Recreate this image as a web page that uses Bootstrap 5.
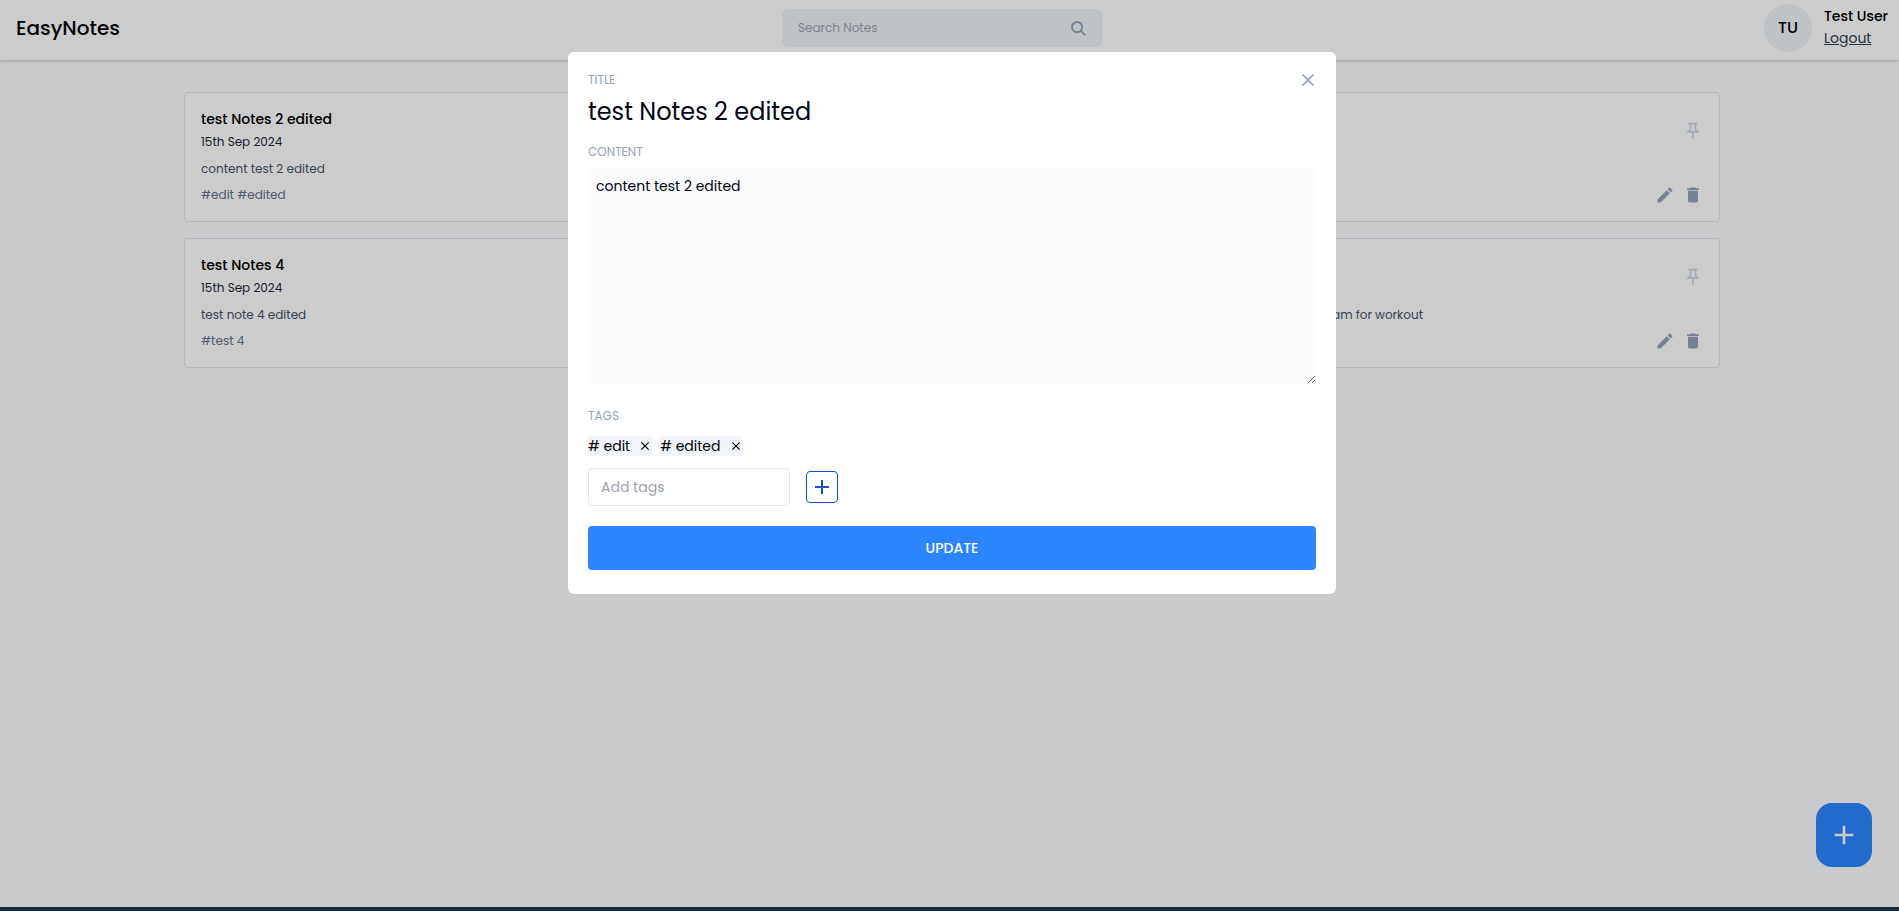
<!DOCTYPE html>
<html lang="en">
<head>
<meta charset="utf-8">
<meta name="viewport" content="width=device-width, initial-scale=1">
<title>EasyNotes</title>
<link href="https://cdn.jsdelivr.net/npm/bootstrap@5.3.0/dist/css/bootstrap.min.css" rel="stylesheet">
<style>
  body { font-family: Poppins, Inter, sans-serif; font-size: 14px; line-height: 20px; color: #000; background: #fcfdff; border-bottom: 4px solid #0f2a3b; }
  button, input, textarea { font-family: inherit; }
  svg { display: block; fill: currentColor; }
  .icon-btn { padding: 0; border: 0; background: none; color: #94a3b8; }
  .topbar { background: #fff; padding: 4px 11px 8px 16px; box-shadow: 0 1px 3px rgba(0,0,0,.22); }
  .brand { font-size: 20px; line-height: 28px; font-weight: 500; width: 104px; color: #000; }
  .searchbox { width: 320px; height: 38px; padding: 0 16px; background: #f0f4f8; border-radius: 6px; }
  .searchbox input { border: 0; background: none; outline: 0; font-size: 12px; min-width: 0; }
  .searchbox input::placeholder, .tag-input::placeholder { color: #9ca3af; opacity: 1; }
  .avatar { width: 48px; height: 48px; border-radius: 50%; background: #f0f4f8; font-size: 16px; font-weight: 500; color: #020617; }
  .logout { line-height: 24px; color: #334155; }
  .board { padding: 32px 0 32px 5px; }
  .notes { display: grid; grid-template-columns: 1fr 1fr; gap: 16px; max-width: 1536px; }
  .note { background: #fff; border: 1px solid #e2e5ea; border-radius: 4px; padding: 16px; }
  .note h2 { font-size: 14px; line-height: 20px; font-weight: 500; margin: 0; }
  .note .when { font-size: 16px; line-height: 24px; height: 24px; }
  .note time { font-size: 12px; color: #1e293b; }
  .note p { font-size: 12px; line-height: 16px; color: #475569; margin: 8px 0; }
  .note .tagline { font-size: 12px; color: #64748b; }
  .note .tail { max-width: 446px; text-align: right; }
  .pin { color: #cbd5e1; }
  .add-note { right: 27px; bottom: 40px; width: 56px; height: 64px; border: 0; border-radius: 16px; background: #2b85ff; color: #fff; }
  .overlay { inset: 0; padding: 52px 0 0 5px; background: rgba(0,0,0,.2); z-index: 10; }
  .dialog { width: 768px; max-width: 100%; background: #fff; border-radius: 6px; padding: 20px 20px 24px; }
  .field-label { font-size: 12px; line-height: 16px; color: #94a3b8; }
  .title-input { border: 0; outline: 0; padding: 0; font-size: 24px; line-height: 32px; height: 32px; color: #020617; }
  .body-input { height: 216px; padding: 8px; border: 0; outline: 0; border-radius: 4px; background: #f8fafc; color: #020617; }
  .chip { background: #f1f5f9; gap: 8px; }
  .chip button { color: #000; }
  .tag-input { width: 202px; height: 38px; padding: 0 12px; border: 1px solid #e5e7eb; border-radius: 4px; outline: 0; }
  .add-tag { width: 32px; height: 32px; padding: 0; border: 1px solid #1d4ed8; border-radius: 4px; background: #fff; color: #1d4ed8; }
  .update { height: 44px; margin-top: 20px; border: 0; border-radius: 4px; background: #2b85ff; color: #fff; font-weight: 500; }
</style>
</head>
<body class="min-vh-100 position-relative">

<svg class="d-none" aria-hidden="true">
  <symbol id="i-pin" viewBox="0 0 24 24"><path d="M14 4v5c0 1.12.37 2.16 1 3H9c.65-.86 1-1.9 1-3V4h4m3-2H7c-.55 0-1 .45-1 1s.45 1 1 1h1v5c0 1.66-1.34 3-3 3v2h5.97v7l1 1 1-1v-7H19v-2c-1.66 0-3-1.34-3-3V4h1c.55 0 1-.45 1-1s-.45-1-1-1z"/></symbol>
  <symbol id="i-edit" viewBox="0 0 24 24"><path d="M3 17.25V21h3.75L17.81 9.94l-3.75-3.75L3 17.25zM20.71 7.04a1 1 0 0 0 0-1.41l-2.34-2.34a1 1 0 0 0-1.41 0l-1.83 1.83 3.75 3.75 1.83-1.83z"/></symbol>
  <symbol id="i-trash" viewBox="0 0 24 24"><path d="M6 19c0 1.1.9 2 2 2h8c1.1 0 2-.9 2-2V7H6v12zM19 4h-3.500l-1-1h-5l-1 1H5v2h14V4z"/></symbol>
  <symbol id="i-close" viewBox="0 0 24 24"><path d="M19 6.410 17.590 5 12 10.590 6.410 5 5 6.410 10.590 12 5 17.590 6.410 19 12 13.410 17.590 19 19 17.590 13.410 12z"/></symbol>
  <symbol id="i-plus" viewBox="0 0 24 24"><path d="M19 13h-6v6h-2v-6H5v-2h6V5h2v6h6v2z"/></symbol>
</svg>

<header class="topbar d-flex align-items-center justify-content-between">
  <div class="brand">EasyNotes</div>
  <form class="searchbox d-flex align-items-center">
    <input class="flex-grow-1 p-0" type="text" placeholder="Search Notes" aria-label="Search Notes">
    <button class="icon-btn" type="button" aria-label="Search"><svg width="15" height="15" viewBox="0 0 15 15"><g fill="none" stroke="currentColor" stroke-width="1.900"><circle cx="6.100" cy="6.100" r="5.100"/><path d="M9.700 9.700 14.400 14.400"/></g></svg></button>
  </form>
  <div class="d-flex align-items-center">
    <div class="avatar d-flex align-items-center justify-content-center flex-shrink-0 me-2">TU</div>
    <div class="ms-1">
      <div class="fw-medium text-nowrap">Test User</div>
      <a class="logout d-block" href="#">Logout</a>
    </div>
  </div>
</header>

<main class="board">
  <div class="notes mx-auto">
    <article class="note">
      <div class="d-flex align-items-center justify-content-between">
        <div><h2>test Notes 2 edited</h2><div class="when"><time>15th Sep 2024</time></div></div>
        <button class="icon-btn pin" aria-label="Pin"><svg width="20" height="20"><use href="#i-pin"/></svg></button>
      </div>
      <p>content test 2 edited</p>
      <div class="d-flex align-items-center justify-content-between">
        <div class="tagline">#edit #edited</div>
        <div class="d-flex gap-2">
          <button class="icon-btn" aria-label="Edit"><svg width="20" height="20"><use href="#i-edit"/></svg></button>
          <button class="icon-btn" aria-label="Delete"><svg width="20" height="20"><use href="#i-trash"/></svg></button>
        </div>
      </div>
    </article>
    <article class="note d-flex flex-column justify-content-between">
      <div class="d-flex align-items-center justify-content-end flex-grow-1 mb-4 pb-2">
        <button class="icon-btn pin" aria-label="Pin"><svg width="20" height="20"><use href="#i-pin"/></svg></button>
      </div>
      <div class="d-flex gap-2 justify-content-end">
        <button class="icon-btn" aria-label="Edit"><svg width="20" height="20"><use href="#i-edit"/></svg></button>
        <button class="icon-btn" aria-label="Delete"><svg width="20" height="20"><use href="#i-trash"/></svg></button>
      </div>
    </article>
    <article class="note">
      <div class="d-flex align-items-center justify-content-between">
        <div><h2>test Notes 4</h2><div class="when"><time>15th Sep 2024</time></div></div>
        <button class="icon-btn pin" aria-label="Pin"><svg width="20" height="20"><use href="#i-pin"/></svg></button>
      </div>
      <p>test note 4 edited</p>
      <div class="d-flex align-items-center justify-content-between">
        <div class="tagline">#test 4</div>
        <div class="d-flex gap-2">
          <button class="icon-btn" aria-label="Edit"><svg width="20" height="20"><use href="#i-edit"/></svg></button>
          <button class="icon-btn" aria-label="Delete"><svg width="20" height="20"><use href="#i-trash"/></svg></button>
        </div>
      </div>
    </article>
    <article class="note d-flex flex-column justify-content-between">
      <div class="d-flex align-items-center justify-content-end flex-grow-1">
        <button class="icon-btn pin" aria-label="Pin"><svg width="20" height="20"><use href="#i-pin"/></svg></button>
      </div>
      <p class="tail">program for workout</p>
      <div class="d-flex gap-2 justify-content-end">
        <button class="icon-btn" aria-label="Edit"><svg width="20" height="20"><use href="#i-edit"/></svg></button>
        <button class="icon-btn" aria-label="Delete"><svg width="20" height="20"><use href="#i-trash"/></svg></button>
      </div>
    </article>
  </div>
</main>

<button class="add-note position-absolute d-flex align-items-center justify-content-center" aria-label="Add note"><svg width="32" height="32"><use href="#i-plus"/></svg></button>

<div class="overlay position-absolute">
  <form class="dialog mx-auto d-flex flex-column" role="dialog" aria-label="Edit note">
    <div class="d-flex align-items-center justify-content-between">
      <label class="field-label" for="title">TITLE</label>
      <button class="icon-btn" type="button" aria-label="Close"><svg width="16" height="16" viewBox="2.500 2.500 19 19"><use href="#i-close" width="24" height="24"/></svg></button>
    </div>
    <input class="title-input w-100 mt-2" id="title" type="text" value="test Notes 2 edited">
    <label class="field-label mt-3" for="content">CONTENT</label>
    <textarea class="body-input w-100 mt-2" id="content">content test 2 edited</textarea>
    <label class="field-label mt-4" for="tag">TAGS</label>
    <div class="d-flex gap-2 mt-2 pt-1">
      <span class="chip d-flex align-items-center"># edit <button class="icon-btn" type="button" aria-label="Remove edit"><svg width="14" height="14"><use href="#i-close"/></svg></button></span>
      <span class="chip d-flex align-items-center"># edited <button class="icon-btn" type="button" aria-label="Remove edited"><svg width="14" height="14"><use href="#i-close"/></svg></button></span>
    </div>
    <div class="d-flex align-items-center gap-3 mt-2 pt-1">
      <input class="tag-input" id="tag" type="text" placeholder="Add tags">
      <button class="add-tag d-flex align-items-center justify-content-center" type="button" aria-label="Add tag"><svg width="24" height="24"><use href="#i-plus"/></svg></button>
    </div>
    <button class="update w-100" type="button">UPDATE</button>
  </form>
</div>

<script src="https://cdn.jsdelivr.net/npm/bootstrap@5.3.0/dist/js/bootstrap.bundle.min.js"></script>
</body>
</html>
